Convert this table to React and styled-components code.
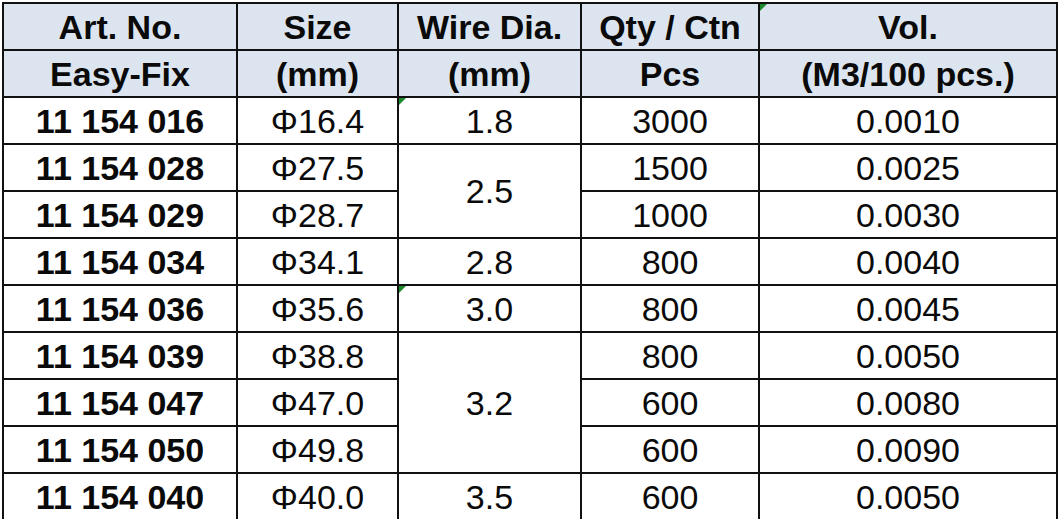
import styled, { createGlobalStyle } from 'styled-components';

const GlobalStyle = createGlobalStyle`
    html, body {
        margin: 0;
        padding: 0;
        background: #ffffff;
    }
`

const Sheet = styled.table`
    border-collapse: collapse;
    table-layout: fixed;
    margin: 2px 0 0 2px;
    width: 1054px;
    font-family: 'Liberation Sans', Arial, sans-serif;
    font-size: 34px;
    color: #0a0a0a;
`

const HeadCell = styled.th`
    background-color: #dce5ef;
    border: 2px solid #111;
    font-weight: bold;
    text-align: center;
    vertical-align: middle;
    padding: 0;
    line-height: 1;
    position: relative;
`

const Cell = styled.td`
    border: 2px solid #111;
    text-align: center;
    vertical-align: middle;
    padding: 0;
    line-height: 1;
    font-weight: ${props => (props.$bold ? 'bold' : 'normal')};
    position: relative;
`

const Row = styled.tr`
    height: 47px;
`

// little green excel "error" triangle in a cell's top-left corner
const Flag = styled.span`
    position: absolute;
    top: 0;
    left: 0;
    width: 0;
    height: 0;
    border-top: 7px solid #1e8a2e;
    border-right: 7px solid transparent;
`

const rows = [
    { art: '11 154 016', size: 'Φ16.4', wire: '1.8', span: 1, qty: '3000', vol: '0.0010', flag: true },
    { art: '11 154 028', size: 'Φ27.5', wire: '2.5', span: 2, qty: '1500', vol: '0.0025' },
    { art: '11 154 029', size: 'Φ28.7', qty: '1000', vol: '0.0030' },
    { art: '11 154 034', size: 'Φ34.1', wire: '2.8', span: 1, qty: '800', vol: '0.0040' },
    { art: '11 154 036', size: 'Φ35.6', wire: '3.0', span: 1, qty: '800', vol: '0.0045', flag: true },
    { art: '11 154 039', size: 'Φ38.8', wire: '3.2', span: 3, qty: '800', vol: '0.0050' },
    { art: '11 154 047', size: 'Φ47.0', qty: '600', vol: '0.0080' },
    { art: '11 154 050', size: 'Φ49.8', qty: '600', vol: '0.0090' },
    { art: '11 154 040', size: 'Φ40.0', wire: '3.5', span: 1, qty: '600', vol: '0.0050' },
]

export default function App() {
    return (
        <>
            <GlobalStyle />
            <Sheet>
                <colgroup>
                    <col style={{ width: 234 }} />
                    <col style={{ width: 161 }} />
                    <col style={{ width: 183 }} />
                    <col style={{ width: 178 }} />
                    <col style={{ width: 298 }} />
                </colgroup>
                <thead>
                    <Row>
                        <HeadCell>Art. No.</HeadCell>
                        <HeadCell>Size</HeadCell>
                        <HeadCell>Wire Dia.</HeadCell>
                        <HeadCell>Qty / Ctn</HeadCell>
                        <HeadCell><Flag />Vol.</HeadCell>
                    </Row>
                    <Row>
                        <HeadCell>Easy-Fix</HeadCell>
                        <HeadCell>(mm)</HeadCell>
                        <HeadCell>(mm)</HeadCell>
                        <HeadCell>Pcs</HeadCell>
                        <HeadCell>(M3/100 pcs.)</HeadCell>
                    </Row>
                </thead>
                <tbody>
                    {rows.map(r => (
                        <Row key={r.art}>
                            <Cell $bold>{r.art}</Cell>
                            <Cell>{r.size}</Cell>
                            {r.wire && (
                                <Cell rowSpan={r.span}>
                                    {r.flag && <Flag />}
                                    {r.wire}
                                </Cell>
                            )}
                            <Cell>{r.qty}</Cell>
                            <Cell>{r.vol}</Cell>
                        </Row>
                    ))}
                </tbody>
            </Sheet>
        </>
    )
}
